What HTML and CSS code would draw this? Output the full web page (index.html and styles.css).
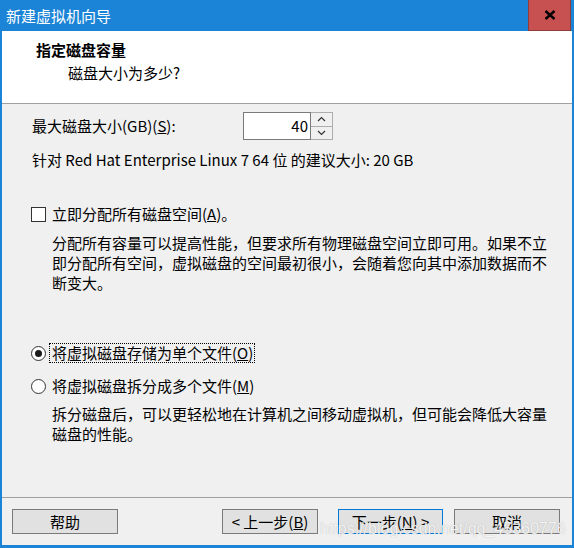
FILE: index.html
```html
<!DOCTYPE html>
<html lang="zh-CN">
<head>
<meta charset="utf-8">
<title>新建虚拟机向导</title>
<link rel="stylesheet" href="styles.css">
</head>
<body>
<div class="window">
  <div class="titlebar">
    <span class="title">新建虚拟机向导</span>
    <div class="close">
      <svg width="12" height="10" viewBox="0 0 12 10"><path d="M1.5 1 L10.5 9 M10.5 1 L1.5 9" stroke="#000" stroke-width="2.4" fill="none"/></svg>
    </div>
  </div>
  <div class="frame">
    <div class="header">
      <div class="h-title">指定磁盘容量</div>
      <div class="h-sub">磁盘大小为多少?</div>
    </div>
    <div class="content">
      <div class="size-row">
        <span class="size-label">最大磁盘大小(GB)(<u>S</u>):</span>
        <div class="spin">
          <div class="spin-value">40</div>
          <div class="spin-btns">
            <div class="spin-btn"><svg width="9" height="6" viewBox="0 0 9 6"><path d="M1 5 L4.5 1.5 L8 5" stroke="#333" stroke-width="1.2" fill="none"/></svg></div>
            <div class="spin-btn"><svg width="9" height="6" viewBox="0 0 9 6"><path d="M1 1 L4.5 4.5 L8 1" stroke="#333" stroke-width="1.2" fill="none"/></svg></div>
          </div>
        </div>
      </div>
      <div class="hint">针对 Red Hat Enterprise Linux 7 64 位 的建议大小: 20 GB</div>
      <div class="check-row">
        <span class="checkbox"></span>
        <span class="opt-label">立即分配所有磁盘空间(<u>A</u>)。</span>
      </div>
      <p class="desc">分配所有容量可以提高性能，但要求所有物理磁盘空间立即可用。如果不立<br>即分配所有空间，虚拟磁盘的空间最初很小，会随着您向其中添加数据而不<br>断变大。</p>
      <div class="radio-row first">
        <span class="radio checked"></span>
        <span class="opt-label focus">将虚拟磁盘存储为单个文件(<u>O</u>)</span>
      </div>
      <div class="radio-row second">
        <span class="radio"></span>
        <span class="opt-label">将虚拟磁盘拆分成多个文件(<u>M</u>)</span>
      </div>
      <p class="desc desc2">拆分磁盘后，可以更轻松地在计算机之间移动虚拟机，但可能会降低大容量<br>磁盘的性能。</p>
    </div>
    <div class="footer">
      <button class="btn help">帮助</button>
      <div class="nav">
        <button class="btn back">&lt; 上一步(<u>B</u>)</button>
        <button class="btn next">下一步(<u>N</u>) &gt;</button>
        <button class="btn cancel">取消</button>
      </div>
      <div class="watermark">https://blog.csdn.net/qq_45360776</div>
    </div>
  </div>
</div>
</body>
</html>
```
FILE: styles.css
```css
html, body {
  margin: 0;
  padding: 0;
}
body {
  font-family: "Noto Sans CJK SC", "Noto Sans", sans-serif;
  font-size: 15px;
  color: #000;
}
.window {
  width: 574px;
  height: 548px;
  background: #1b84d6;
  display: flex;
  flex-direction: column;
}
.titlebar {
  height: 31px;
  flex: 0 0 31px;
  display: flex;
  align-items: center;
  justify-content: space-between;
  padding-left: 6px;
  padding-right: 3px;
  color: #fff;
}
.title {
  line-height: 20px;
  font-size: 15px;
}
.close {
  width: 43px;
  height: 31px;
  box-sizing: border-box;
  background: #c75050;
  border: 1px solid #8e3d39;
  border-top: none;
  display: flex;
  align-items: center;
  justify-content: center;
  align-self: flex-start;
}
.frame {
  flex: 1;
  margin: 0 2px 3px 2px;
  background: #f0f0f0;
  display: flex;
  flex-direction: column;
  position: relative;
}
.header {
  height: 73px;
  box-sizing: border-box;
  background: #fff;
  border-bottom: 1px solid #a0a0a0;
  padding-top: 9px;
}
.h-title {
  padding-left: 34px;
  line-height: 20px;
  font-weight: bold;
}
.h-sub {
  padding-left: 66px;
  margin-top: 3px;
  line-height: 20px;
}
.content {
  flex: 1;
  padding-left: 30px;
}
.size-row {
  margin-top: 8px;
  height: 28px;
  display: flex;
  align-items: center;
}
.size-label {
  flex: 0 0 211px;
  line-height: 20px;
}
.spin {
  display: flex;
  height: 28px;
}
.spin-value {
  width: 68px;
  box-sizing: border-box;
  border: 1px solid #7a7a7a;
  background: #fff;
  text-align: right;
  padding-right: 2px;
  line-height: 26px;
}
.spin-btns {
  width: 22px;
  display: flex;
  flex-direction: column;
}
.spin-btn {
  flex: 1;
  box-sizing: border-box;
  border: 1px solid #adadad;
  border-left: none;
  background: #f0f0f0;
  display: flex;
  align-items: center;
  justify-content: center;
}
.spin-btn + .spin-btn {
  border-top: none;
}
.hint {
  margin-top: 10px;
  line-height: 20px;
}
.check-row, .radio-row {
  height: 20px;
  display: flex;
  align-items: center;
}
.check-row {
  margin-top: 34px;
}
.checkbox {
  width: 15px;
  height: 15px;
  box-sizing: border-box;
  border: 1px solid #333;
  background: #fff;
  margin-left: -1px;
  margin-right: 6px;
}
.opt-label {
  line-height: 18px;
}
.desc {
  margin: 9px 0 0 20px;
  line-height: 20px;
}
.radio-row.first {
  margin-top: 50px;
}
.radio-row.second {
  margin-top: 13px;
}
.radio {
  width: 15px;
  height: 15px;
  box-sizing: border-box;
  border: 1px solid #333;
  border-radius: 50%;
  background: #fff;
  margin-left: -1px;
  margin-right: 4px;
  display: flex;
  align-items: center;
  justify-content: center;
}
.radio.checked::after {
  content: "";
  width: 7px;
  height: 7px;
  border-radius: 50%;
  background: #1a1a1a;
}
.focus {
  outline: 1px dotted #000;
  padding: 0 1px 0 2px;
}
.radio-row.second .opt-label {
  padding-left: 2px;
}
.desc2 {
  margin-top: 8px;
}
.footer {
  border-top: 1px solid #a0a0a0;
  padding: 11px 12px 11px 10px;
  display: flex;
  position: relative;
}
.btn {
  height: 25px;
  box-sizing: border-box;
  border: 1px solid #7a7a7a;
  background: #e1e1e1;
  font-family: inherit;
  font-size: 15px;
  line-height: 20px;
  padding: 0;
  color: #000;
}
.help {
  width: 106px;
}
.nav {
  margin-left: auto;
  display: flex;
}
.back {
  width: 96px;
}
.next {
  width: 105px;
  margin-left: 20px;
  border-color: #0078d7;
}
.cancel {
  width: 106px;
  margin-left: 11px;
}
.watermark {
  position: absolute;
  left: 318px;
  top: 22px;
  font-family: "Liberation Sans", Arial, sans-serif;
  font-size: 16px;
  line-height: 18px;
  color: rgba(255, 255, 255, 0.85);
  text-shadow: 0 0 1px rgba(110, 110, 110, 0.5);
  white-space: nowrap;
}
```
